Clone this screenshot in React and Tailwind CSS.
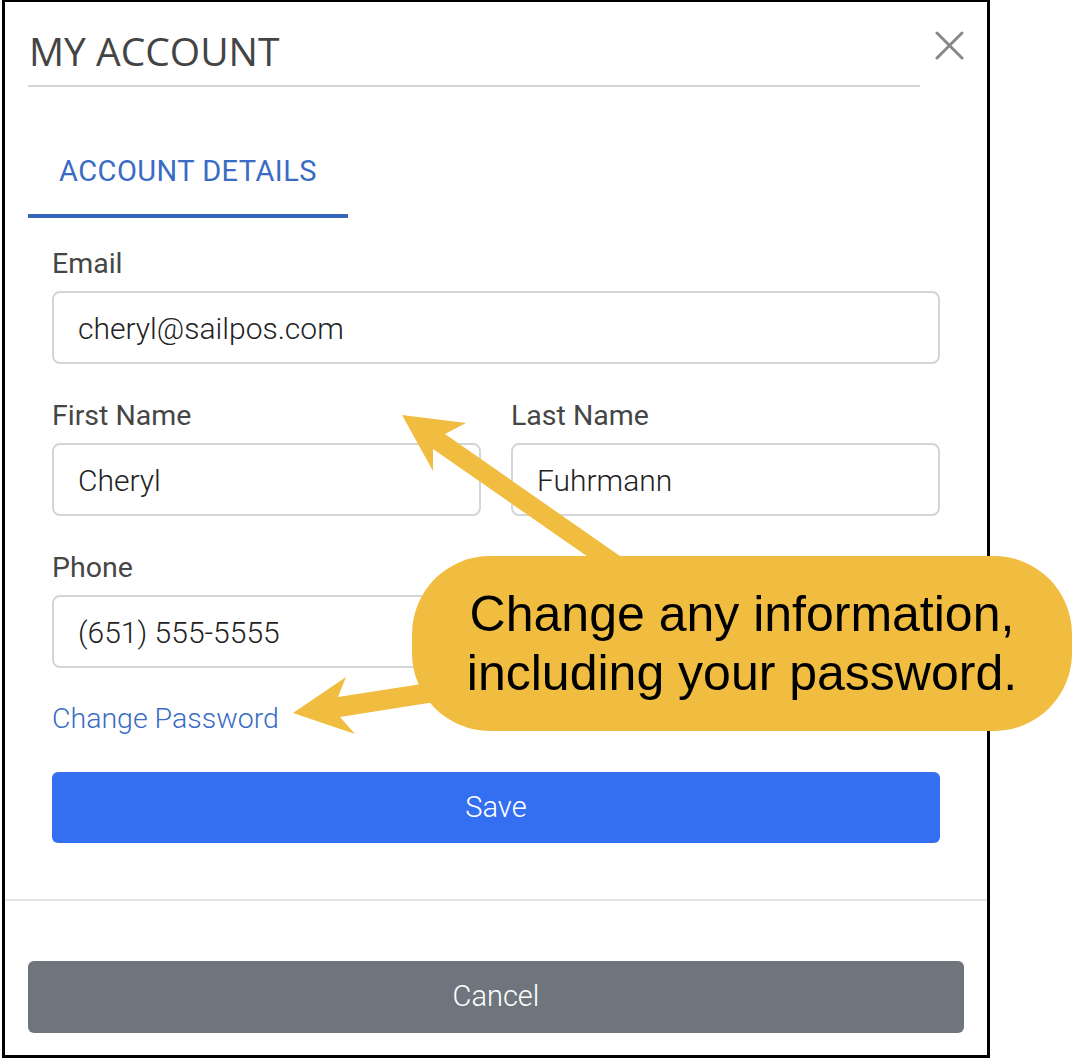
import React from 'react'

const Field = ({ label, value, className = '' }) => (
  <div className={className}>
    <label className="block text-[28.5px] leading-[32px] text-[#464646]">{label}</label>
    <div className="mt-[11px] flex h-[73px] items-center rounded-[8px] border-2 border-[#d2d6db] px-[24px] pt-[1px] text-[30px] font-light text-[#222]">
      {value}
    </div>
  </div>
)

export default function App() {
  return (
    <div className="relative h-[1060px] w-[1072px] overflow-hidden bg-white font-['Roboto',sans-serif]">
      <div className="ml-[2px] flex h-[1058px] w-[988px] flex-col border-[3px] border-t-2 border-black bg-white">
        {/* header */}
        <div className="flex items-start px-[23px] pt-[25px]">
          <div className="w-[892px]">
            <h1 className="pl-[1px] font-['Open_Sans',sans-serif] text-[39px] leading-[48px] text-[#444]">MY ACCOUNT</h1>
            <div className="mt-[10px] h-[2px] bg-[#d4d4d4]" />
          </div>
          <button className="ml-[15px] mt-[4px] h-[29px] w-[29px]">
            <svg viewBox="0 0 29 29" className="h-[29px] w-[29px]">
              <path d="M2 2L27 27M27 2L2 27" stroke="#888" strokeWidth="3" strokeLinecap="round" />
            </svg>
          </button>
        </div>

        {/* tab */}
        <div className="ml-[23px] mt-[66px] w-[320px] border-b-4 border-[#3366bb] pb-[25px] text-center text-[29px] leading-[36px] tracking-[0.45px] text-[#3a6cc4]">
          ACCOUNT DETAILS
        </div>

        {/* form */}
        <div className="px-[47px] pt-[30px]">
          <Field label="Email" value="cheryl@sailpos.com" />
          <div className="mt-[36px] grid grid-cols-2 gap-[30px]">
            <Field label="First Name" value="Cheryl" />
            <Field label="Last Name" value="Fuhrmann" />
          </div>
          <div className="mt-[36px] grid grid-cols-2 gap-[30px]">
            <Field label="Phone" value="(651) 555-5555" />
          </div>
          <a className="mt-[35px] block text-[28.5px] font-light leading-[32px] text-[#3a6cc4]">Change Password</a>
          <button className="mt-[37px] flex h-[71px] w-full items-center justify-center rounded-[6px] bg-[#346ff2] text-[29px] font-light text-white">
            Save
          </button>
        </div>

        <div className="mt-[56px] h-[2px] bg-[#e1e5e9]" />

        <div className="px-[23px] pt-[60px]">
          <button className="flex h-[72px] w-full items-center justify-center rounded-[6px] bg-[#6f757d] text-[29px] font-light text-white">
            Cancel
          </button>
        </div>
      </div>

      {/* callout overlay */}
      <svg className="pointer-events-none absolute left-0 top-0" width="1072" height="1060">
        <polygon points="402,415 466,423 445,434 683,600 650,600 433,449 433,471" fill="#f0bd41" />
        <polygon points="293,713 346,677 338,697 460,678 460,698 340,717 355,734" fill="#f0bd41" />
      </svg>
      <div className="absolute left-[412px] top-[556px] flex h-[175px] w-[660px] items-center justify-center rounded-[78px] bg-[#f0bd41] text-center font-['Liberation_Sans',Arial,sans-serif] text-[50px] leading-[59px] text-black">
        <p>
          Change any information,
          <br />
          including your password.
        </p>
      </div>
    </div>
  )
}
